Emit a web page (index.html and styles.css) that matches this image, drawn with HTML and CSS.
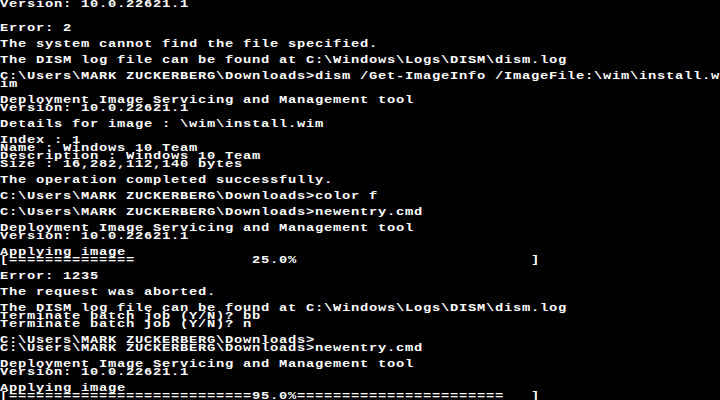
FILE: index.html
```html
<!DOCTYPE html>
<html lang="en">
<head>
    <meta charset="UTF-8">
    <meta name="viewport" content="width=device-width, initial-scale=1.0">
    <title>Command Prompt</title>
    <link rel="stylesheet" href="styles.css">
</head>
<body>
    <div class="console">
<pre class="screen">Version: 10.0.22621.1


Error: 2

The system cannot find the file specified.

The DISM log file can be found at C:\Windows\Logs\DISM\dism.log

C:\Users\MARK ZUCKERBERG\Downloads&gt;dism /Get-ImageInfo /ImageFile:\wim\install.w
im

Deployment Image Servicing and Management tool
Version: 10.0.22621.1

Details for image : \wim\install.wim

Index : 1
Name : Windows 10 Team
Description : Windows 10 Team
Size : 16,282,112,140 bytes

The operation completed successfully.

C:\Users\MARK ZUCKERBERG\Downloads&gt;color f

C:\Users\MARK ZUCKERBERG\Downloads&gt;newentry.cmd

Deployment Image Servicing and Management tool
Version: 10.0.22621.1

Applying image
[==============             25.0%                          ]

Error: 1235

The request was aborted.

The DISM log file can be found at C:\Windows\Logs\DISM\dism.log
Terminate batch job (Y/N)? bb
Terminate batch job (Y/N)? n

C:\Users\MARK ZUCKERBERG\Downloads&gt;
C:\Users\MARK ZUCKERBERG\Downloads&gt;newentry.cmd

Deployment Image Servicing and Management tool
Version: 10.0.22621.1

Applying image
[===========================95.0%=======================   ]</pre>
    </div>
</body>
</html>
```

FILE: styles.css
```css
html, body {
    margin: 0;
    padding: 0;
    background-color: #000;
}

.console {
    width: 720px;
    height: 400px;
    overflow: hidden;
    background-color: #000;
}

/* 80 columns x 50 rows, 9x8 cells; glyphs stretched wide like the VGA font */
.screen {
    margin: 0;
    width: 576px;
    color: #fff;
    font-family: "Liberation Mono", monospace;
    font-weight: bold;
    font-size: 11px;
    line-height: 8px;
    letter-spacing: 0.6px;
    white-space: pre;
    transform: scaleX(1.25);
    transform-origin: left top;
}
```
